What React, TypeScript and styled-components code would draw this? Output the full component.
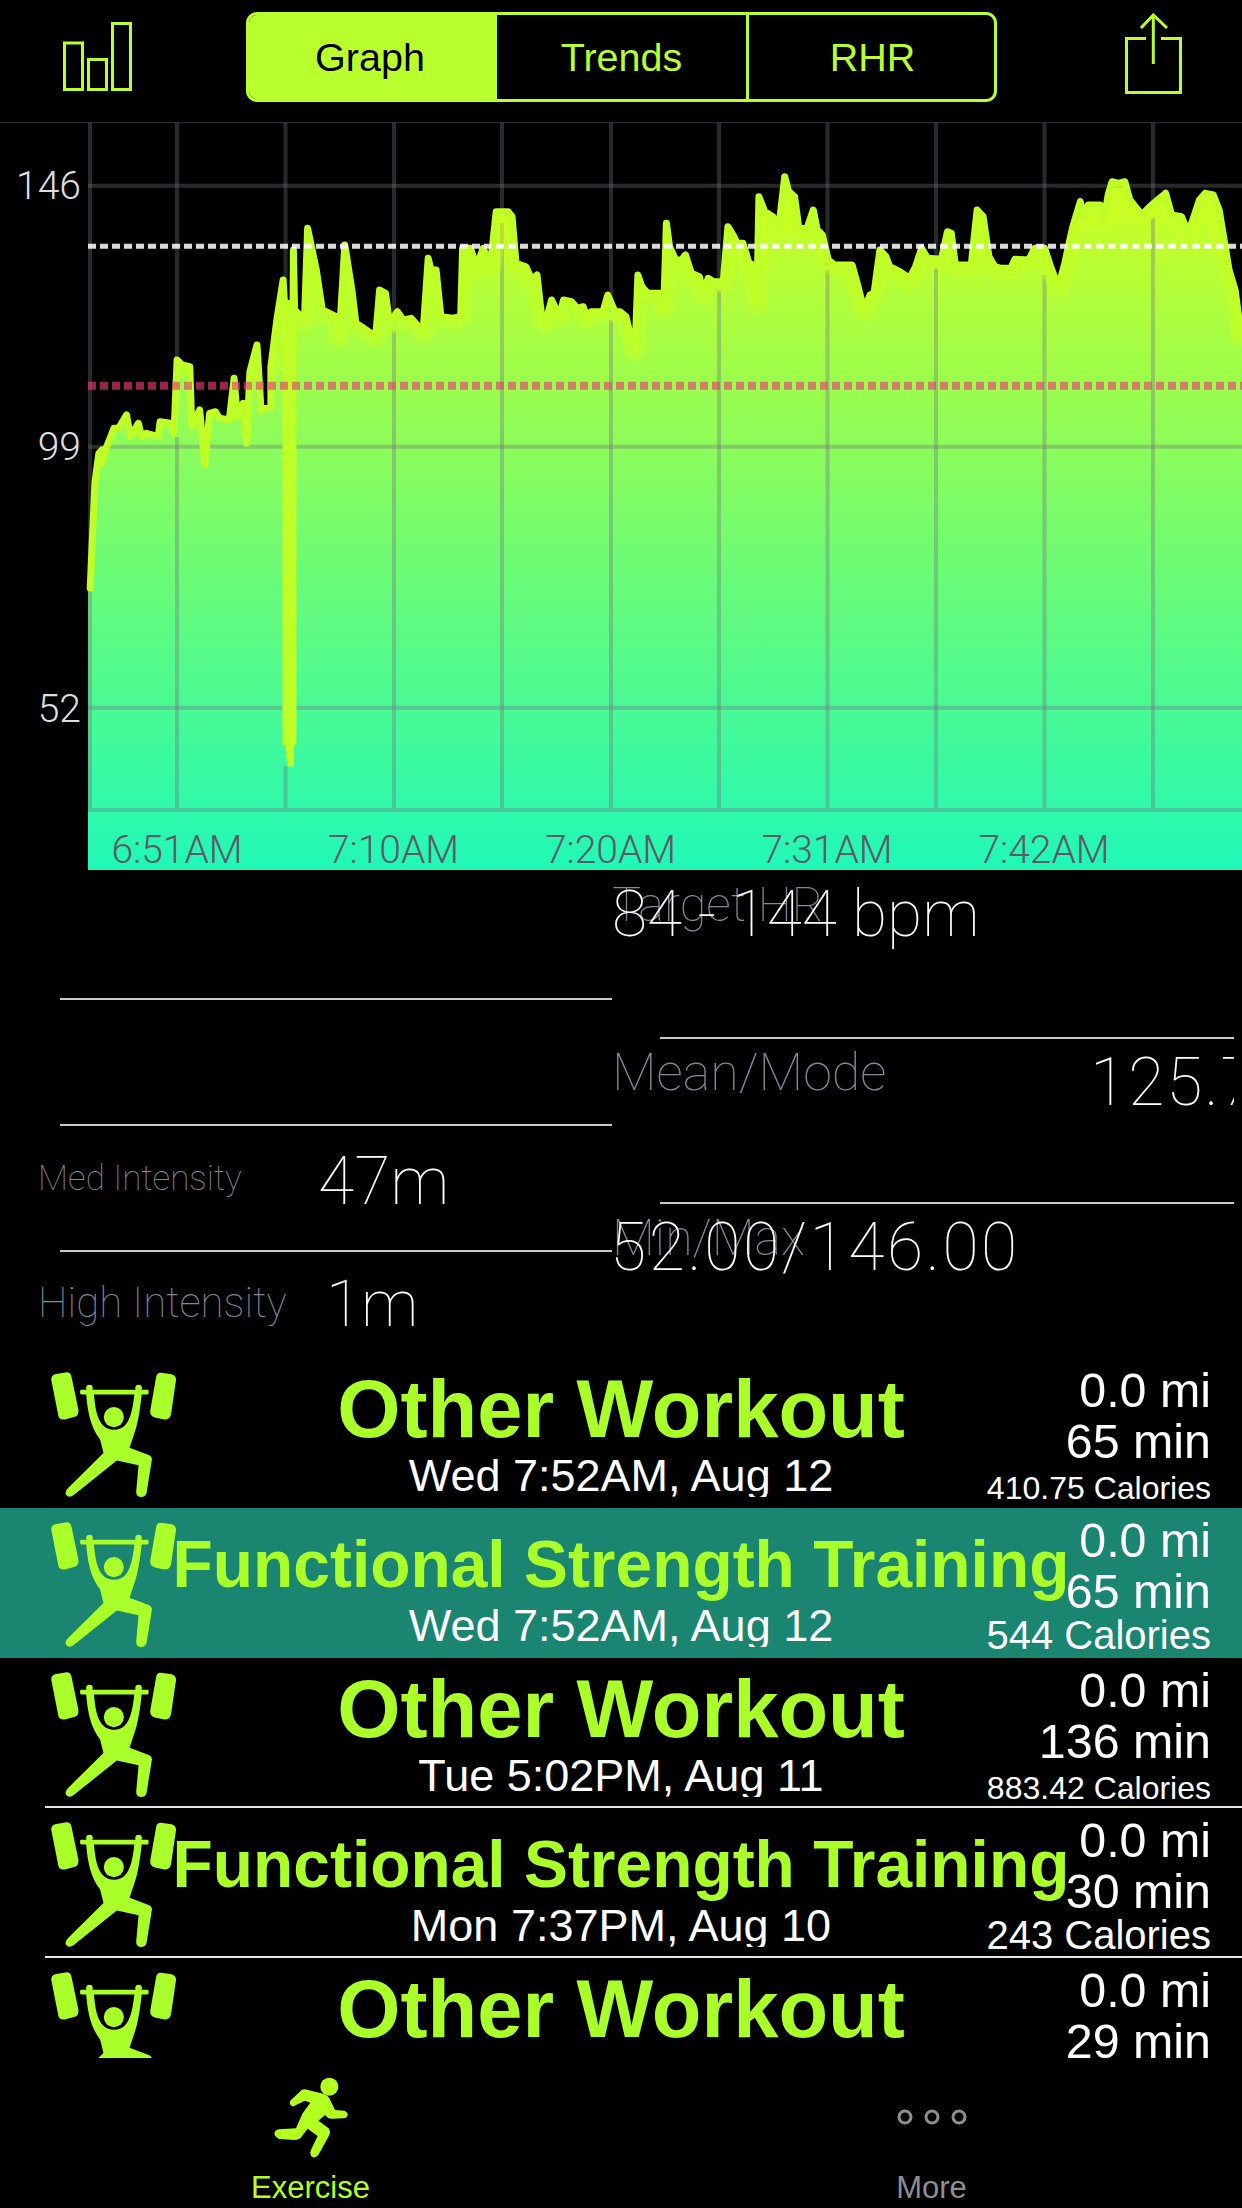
import React from "react";
import styled, { createGlobalStyle } from "styled-components";

const LIME = "#b9ff2e";
const GREEN = "#aaff2b";
const SLATE = "#808a9a";
const SANS = `"Liberation Sans", Arial, sans-serif`;
const THIN = `Roboto, "Liberation Sans", sans-serif`;

const Global = createGlobalStyle`
  html, body { margin: 0; padding: 0; background: #000; }
  body { width: 1242px; height: 2208px; overflow: hidden; font-family: ${SANS}; }
`;

const Screen = styled.div`
  width: 1242px;
  height: 2208px;
  background: #000;
  display: flex;
  flex-direction: column;
  overflow: hidden;
`;

/* ---------- top bar ---------- */
const NavBar = styled.header`
  height: 122px;
  flex: none;
  display: flex;
  align-items: flex-start;
  padding: 12px 0 0 63px;
  box-sizing: border-box;
`;
const NavIcon = styled.svg<{ $top: number; $left?: number }>`
  display: block;
  flex: none;
  margin-top: ${(p) => p.$top}px;
  margin-left: ${(p) => p.$left ?? 0}px;
`;
const Segmented = styled.div`
  flex: none;
  margin-left: 114px;
  width: 751px;
  height: 90px;
  box-sizing: border-box;
  border: 3px solid ${LIME};
  border-radius: 11px;
  display: grid;
  grid-template-columns: 248px 252px 1fr;
  overflow: hidden;
`;
const Segment = styled.div<{ $active?: boolean; $divider?: boolean; $nudge?: number }>`
  display: flex;
  align-items: center;
  justify-content: center;
  box-sizing: border-box;
  font-size: 39.5px;
  color: ${(p) => (p.$active ? "#000" : LIME)};
  background: ${(p) => (p.$active ? LIME : "transparent")};
  border-right: ${(p) => (p.$divider ? `3px solid ${LIME}` : "none")};
  padding-left: ${(p) => Math.max(p.$nudge ?? 0, 0)}px;
  padding-right: ${(p) => Math.max(-(p.$nudge ?? 0), 0)}px;
`;

/* ---------- chart ---------- */
const ChartPanel = styled.section`
  height: 748px;
  flex: none;
`;
const ChartSvg = styled.svg`
  display: block;
  width: 1242px;
  height: 748px;
`;

const leftZoom: [number, number][] = [
  [228,1404],[232,1300],[240,1090],[243,1060],[250,1000],[258,990],[258,1030],[268,985],[280,950],[288,925],[300,925],[320,885],[330,950],[350,910],[358,950],[370,940],[400,950],[405,905],[430,910],[440,940],[448,720],[460,735],[480,740],[485,920],[505,870],[518,1035],[530,880],[545,875],[555,895],[580,900],[592,775],[600,890],[615,850],[624,970],[632,755],[650,675],[660,870],[685,860],[685,740],[700,600],[716,480],[722,600],[730,1870],[735,1930],[735,1870],[742,390],[745,570],[770,600],[778,325],[800,450],[815,570],[850,590],[858,650],[872,375],[890,510],[900,610],[920,625],[950,650],[960,510],[975,520],[985,610],[1005,575],[1020,600],[1040,595],[1070,635],[1083,415],[1090,450],[1103,450],[1115,590],[1145,595],[1165,590],[1170,385],[1190,385],[1205,440],[1222,385],[1240,440],[1255,275],[1285,275],[1295,290],[1305,430],[1330,440],[1345,480],[1358,465],[1370,590],[1380,605],[1395,540],[1415,590],[1425,540],[1445,545],[1460,565],[1475,560],[1485,595],[1495,575],[1525,575],[1537,525],[1555,575],
];
const rightZoom: [number, number][] = [
  [0,575],[15,590],[25,640],[38,690],[45,465],[55,500],[70,520],[100,520],[110,565],[117,310],[125,380],[140,420],[155,420],[165,405],[180,460],[200,470],[210,520],[222,475],[235,485],[260,485],[272,320],[285,345],[295,370],[310,370],[325,430],[335,435],[345,550],[350,230],[365,275],[385,290],[400,325],[415,170],[425,215],[440,230],[450,320],[470,330],[487,270],[497,330],[510,345],[525,420],[540,435],[585,435],[600,500],[615,570],[630,525],[640,520],[655,390],[670,410],[680,440],[705,455],[730,475],[745,440],[760,385],[775,415],[810,418],[825,335],[835,340],[845,435],[885,435],[900,270],[915,290],[930,410],[945,440],[960,445],[985,445],[995,418],[1030,420],[1045,385],[1070,385],[1085,440],[1105,500],[1120,435],[1140,325],[1160,245],[1170,295],[1180,255],[1210,255],[1220,300],[1230,225],[1240,185],[1255,190],[1272,185],[1285,240],[1315,285],[1335,260],[1355,240],[1375,220],[1390,285],[1415,290],[1432,340],[1460,240],[1475,220],[1495,225],[1510,270],[1535,450],[1550,510],[1568,670],
];
const tracePoints = [
  ...leftZoom.map(([x, y]) => [x / 2.529, 120 + y / 3]),
  ...rightZoom.map(([x, y]) => [620 + x / 2.52, 120 + y / 3]),
];
const toPoints = (pts: number[][]) => pts.map(([x, y]) => `${x.toFixed(1)},${y.toFixed(1)}`).join(" ");
const trace = toPoints(tracePoints);
const crest = toPoints(tracePoints.filter(([, y]) => y < 400));
const areaShape = `88,870 88,590 ${trace} 1242,870`;
const gridColumns = [
  { x: 90, top: 587, start: 590 },
  { x: 177, top: 360, start: 437 },
  { x: 285.5, top: 290, start: 766 },
  { x: 394, top: 323, start: 330 },
  { x: 502, top: 212, start: 223 },
  { x: 611, top: 312, start: 320 },
  { x: 719, top: 282, start: 290 },
  { x: 827.5, top: 265, start: 270 },
  { x: 936, top: 259, start: 268 },
  { x: 1044.5, top: 248, start: 275 },
  { x: 1153, top: 207, start: 218 },
];
const gridYs = [185.7, 446.7, 707.7, 810];
const GRID = "rgba(110,115,125,.36)";

const axis = [
  { t: "146", y: 199 },
  { t: "99", y: 460 },
  { t: "52", y: 722 },
];
const times = [
  { t: "6:51AM", x: 177 },
  { t: "7:10AM", x: 393.5 },
  { t: "7:20AM", x: 610.5 },
  { t: "7:31AM", x: 827 },
  { t: "7:42AM", x: 1044 },
];

const AxisText = styled.text`
  font-family: ${THIN};
  font-weight: 300;
  font-size: 39px;
  fill: #dedede;
`;
const TimeText = styled.text`
  font-family: ${THIN};
  font-weight: 300;
  font-size: 39px;
  fill: #5d5a66;
`;

const Chart = () => (
  <ChartSvg viewBox="0 122 1242 748">
    <defs>
      <linearGradient id="hr" gradientUnits="userSpaceOnUse" x1="0" y1="170" x2="0" y2="870">
        <stop offset="0" stopColor="#d2ff1e" />
        <stop offset="1" stopColor="#20f8b8" />
      </linearGradient>
      <clipPath id="under">
        <polygon points={areaShape} />
      </clipPath>
    </defs>
    <line x1="0" x2="1242" y1="122.5" y2="122.5" stroke="#2c2e33" strokeWidth="1.5" />
    <polygon points={areaShape} fill="url(#hr)" />
    {gridColumns.map((c) => (
      <React.Fragment key={c.x}>
        <line x1={c.x} x2={c.x} y1="123" y2={c.top} stroke={GRID} strokeWidth="4" />
        <line x1={c.x} x2={c.x} y1={c.start} y2="808" stroke={GRID} strokeWidth="4" />
      </React.Fragment>
    ))}
    {gridYs.map((y) => (
      <line key={y} x1="88" x2="1242" y1={y} y2={y} stroke={GRID} strokeWidth="4" />
    ))}
    <g clipPath="url(#under)">
      <polyline points={crest} fill="none" stroke="rgba(205,255,30,.4)" strokeWidth="22" strokeLinejoin="round" />
    </g>
    <polyline points={trace} fill="none" stroke="#bfff27" strokeWidth="7" strokeLinejoin="round" strokeLinecap="round" />
    <line x1="289.5" x2="289.5" y1="300" y2="745" stroke="#bfff27" strokeWidth="14" />
    <line x1="88" x2="1242" y1="246.3" y2="246.3" stroke="rgba(255,255,255,.86)" strokeWidth="5" strokeDasharray="8 4" />
    <line x1="88" x2="1242" y1="385.7" y2="385.7" stroke="rgba(238,58,118,.64)" strokeWidth="8" strokeDasharray="8 4" />
    {axis.map((a) => (
      <AxisText key={a.t} x="81" y={a.y} textAnchor="end">{a.t}</AxisText>
    ))}
    {times.map((a) => (
      <TimeText key={a.t} x={a.x} y="863" textAnchor="middle">{a.t}</TimeText>
    ))}
  </ChartSvg>
);

/* ---------- stats ---------- */
const Stats = styled.section`
  height: 488px;
  flex: none;
  display: flex;
  overflow: hidden;
`;
const LeftColumn = styled.div`
  width: 612px;
  flex: none;
  padding-top: 128px;
  box-sizing: border-box;
`;
const RightColumn = styled.div`
  width: 622px;
  flex: none;
  overflow: hidden;
`;
const Rule = styled.div<{ $inset: number }>`
  height: 2px;
  margin-left: ${(p) => p.$inset}px;
  background: #c9c9cc;
`;
const LeftRow = styled.div`
  height: 126px;
`;
const LeftCells = styled.div`
  display: flex;
  align-items: flex-start;
  padding-left: 38px;
`;
const RightRow = styled.div<{ $height: number }>`
  height: ${(p) => p.$height}px;
`;
const RightCells = styled.div`
  display: grid;
  & > * { grid-area: 1 / 1; }
`;
const StatLabel = styled.div<{ $size: number; $top: number; $width: number }>`
  font-family: ${THIN};
  font-weight: 100;
  font-size: ${(p) => p.$size}px;
  line-height: 1;
  color: ${SLATE};
  white-space: nowrap;
  margin-top: ${(p) => p.$top}px;
  min-width: ${(p) => p.$width}px;
`;
const StatValue = styled.div<{ $size: number; $top: number; $left?: number; $spread?: number }>`
  font-family: ${THIN};
  font-weight: 100;
  font-size: ${(p) => p.$size}px;
  letter-spacing: ${(p) => p.$spread ?? 0}px;
  line-height: 1;
  color: #fff;
  white-space: nowrap;
  margin-top: ${(p) => p.$top}px;
  margin-left: ${(p) => p.$left ?? 0}px;
`;

/* ---------- workout list ---------- */
const List = styled.section`
  height: 700px;
  flex: none;
  overflow: hidden;
`;
const Row = styled.article<{ $selected?: boolean }>`
  height: 150px;
  display: grid;
  background: ${(p) => (p.$selected ? "#1a8570" : "transparent")};
  & > * { grid-area: 1 / 1; }
`;
const Separator = styled.div`
  height: 2px;
  margin: -2px 0 0 45px;
  background: #e6e6e6;
  position: relative;
`;
const LifterSvg = styled.svg`
  display: block;
  width: 127px;
  height: 127px;
  margin: 13px 0 0 50px;
  justify-self: start;
`;
const Middle = styled.div`
  justify-self: center;
  text-align: center;
  white-space: nowrap;
`;
const Title = styled.div<{ $fit?: boolean }>`
  height: 96px;
  font-weight: 700;
  color: ${GREEN};
  font-size: ${(p) => (p.$fit ? 65.9 : 81.3)}px;
  line-height: ${(p) => (p.$fit ? 113 : 102)}px;
`;
const DateLine = styled.div`
  height: 43px;
  overflow: hidden;
  font-size: 45px;
  line-height: 44px;
  color: #fff;
`;
const Figures = styled.div`
  justify-self: end;
  margin-right: 31px;
  padding-top: 7px;
  text-align: right;
  color: #fff;
  white-space: nowrap;
`;
const Figure = styled.div`
  font-size: 48.4px;
  line-height: 51px;
`;
const Calories = styled.div<{ $fit?: boolean }>`
  font-size: ${(p) => (p.$fit ? 40 : 32)}px;
  line-height: ${(p) => (p.$fit ? 36 : 42)}px;
`;

const Lifter = () => (
  <LifterSvg viewBox="150 60 380 380">
    <g fill={GREEN}>
      <path d="M165,70 L200,64 Q211,64 214,76 L235,176 Q237,194 222,198 L194,205 Q178,207 175,194 L154,88 Q152,74 165,70 Z" />
      <path d="M482,65 L514,70 Q528,74 527,88 L512,190 Q508,206 492,205 L464,199 Q448,194 450,178 L468,76 Q471,64 482,65 Z" />
      <rect x="240" y="116" width="205" height="14" rx="4" />
      <circle cx="268" cy="111" r="10" />
      <circle cx="415" cy="111" r="10" />
      <circle cx="341" cy="198" r="30" />
      <path d="M258,125 L281,125 C285,170 290,205 310,224 C325,240 358,240 373,224 C392,205 398,170 403,125 L425,125 C420,170 414,215 402,248 L388,290 L447,312 Q456,317 455,325 L439,425 Q435,438 421,437 Q407,435 408,420 L415,342 L350,328 L222,430 Q207,442 198,430 Q193,420 205,409 L310,305 L300,265 C270,225 262,180 258,125 Z" />
    </g>
  </LifterSvg>
);

const workouts = [
  { title: "Other Workout", date: "Wed 7:52AM, Aug 12", min: "65 min", cal: "410.75 Calories" },
  { title: "Functional Strength Training", fit: true, selected: true, date: "Wed 7:52AM, Aug 12", min: "65 min", cal: "544 Calories" },
  { title: "Other Workout", date: "Tue 5:02PM, Aug 11", min: "136 min", cal: "883.42 Calories", rule: true },
  { title: "Functional Strength Training", fit: true, date: "Mon 7:37PM, Aug 10", min: "30 min", cal: "243 Calories", rule: true },
  { title: "Other Workout", date: "", min: "29 min", cal: "" },
];

/* ---------- tab bar ---------- */
const TabBar = styled.nav`
  height: 150px;
  flex: none;
  display: grid;
  grid-template-columns: 1fr 1fr;
`;
const Tab = styled.div<{ $active?: boolean }>`
  display: flex;
  flex-direction: column;
  align-items: center;
  padding-top: 12px;
  color: ${(p) => (p.$active ? "#b2ff20" : "#8e8e93")};
`;
const TabIcon = styled.svg`
  display: block;
  width: 100px;
  height: 100px;
`;
const TabLabel = styled.div`
  font-size: 31px;
  line-height: 36px;
`;

export default function App() {
  return (
    <Screen>
      <Global />
      <NavBar>
        <NavIcon $top={10} width="69" height="69" viewBox="63 22 69 69" fill="none" stroke={LIME} strokeWidth="3">
          <rect x="64.5" y="43" width="18" height="46.5" />
          <rect x="88.5" y="59.5" width="18" height="30" />
          <rect x="112.5" y="23.5" width="18" height="66" />
        </NavIcon>
        <Segmented>
          <Segment $active $nudge={-6}>Graph</Segment>
          <Segment $divider>Trends</Segment>
          <Segment $nudge={2}>RHR</Segment>
        </Segmented>
        <NavIcon $top={1} $left={128} width="57" height="81" viewBox="1125 13 57 81" fill="none" stroke={LIME} strokeWidth="3">
          <path d="M1146,38.5 H1126.5 V92.5 H1180.5 V38.5 H1161" />
          <path d="M1153.3,64 V15" />
          <path d="M1141,28 L1153.3,15 L1167,28" />
        </NavIcon>
      </NavBar>

      <ChartPanel>
        <Chart />
      </ChartPanel>

      <Stats>
        <LeftColumn>
          <LeftRow>
            <Rule $inset={60} />
          </LeftRow>
          <LeftRow>
            <Rule $inset={60} />
            <LeftCells>
              <StatLabel $size={35} $top={35} $width={280}>Med Intensity</StatLabel>
              <StatValue $size={66} $top={23}>47m</StatValue>
            </LeftCells>
          </LeftRow>
          <LeftRow>
            <Rule $inset={60} />
            <LeftCells>
              <StatLabel $size={42} $top={30} $width={288}>High Intensity</StatLabel>
              <StatValue $size={64} $top={21}>1m</StatValue>
            </LeftCells>
          </LeftRow>
        </LeftColumn>
        <RightColumn>
          <RightRow $height={167}>
            <RightCells>
              <StatLabel $size={48.5} $top={11} $width={0}>Target HR</StatLabel>
              <StatValue $size={64} $top={13}>84 - 144 bpm</StatValue>
            </RightCells>
          </RightRow>
          <RightRow $height={165}>
            <Rule $inset={48} />
            <RightCells>
              <StatLabel $size={52} $top={8} $width={0}>Mean/Mode</StatLabel>
              <StatValue $size={66} $top={11} $left={478} $spread={2}>125.79/130.00</StatValue>
            </RightCells>
          </RightRow>
          <RightRow $height={156}>
            <Rule $inset={48} />
            <RightCells>
              <StatLabel $size={50} $top={9} $width={0}>Min/Max</StatLabel>
              <StatValue $size={66} $top={11} $left={-2} $spread={2.6}>52.00/146.00</StatValue>
            </RightCells>
          </RightRow>
        </RightColumn>
      </Stats>

      <List>
        {workouts.map((w, i) => (
          <React.Fragment key={i}>
            <Row $selected={w.selected}>
              <Lifter />
              <Middle>
                <Title $fit={w.fit}>{w.title}</Title>
                {w.date && <DateLine>{w.date}</DateLine>}
              </Middle>
              <Figures>
                <Figure>0.0 mi</Figure>
                <Figure>{w.min}</Figure>
                {w.cal && <Calories $fit={w.fit}>{w.cal}</Calories>}
              </Figures>
            </Row>
            {w.rule && <Separator />}
          </React.Fragment>
        ))}
      </List>

      <TabBar>
        <Tab $active>
          <TabIcon viewBox="0 0 300 300" fill="currentColor">
            <circle cx="205" cy="50" r="27" />
            <path d="M92,108 Q82,100 90,90 L122,60 Q130,56 140,60 L190,72 Q200,76 205,85 L222,120 L250,122 Q262,128 260,135 Q258,145 248,145 L212,146 Q200,146 192,135 L172,152 L203,175 Q210,185 205,195 L172,255 Q160,268 150,258 Q145,250 150,240 L170,198 L140,176 L118,205 Q112,210 100,210 L55,207 Q40,200 40,190 Q42,180 55,178 L105,175 L125,130 L148,98 L132,92 L105,105 Q98,110 92,108 Z" />
          </TabIcon>
          <TabLabel>Exercise</TabLabel>
        </Tab>
        <Tab>
          <TabIcon viewBox="0 0 100 100" fill="none" stroke="currentColor" strokeWidth="3">
            <circle cx="23" cy="47" r="6" />
            <circle cx="50" cy="47" r="6" />
            <circle cx="77" cy="47" r="6" />
          </TabIcon>
          <TabLabel>More</TabLabel>
        </Tab>
      </TabBar>
    </Screen>
  );
}
